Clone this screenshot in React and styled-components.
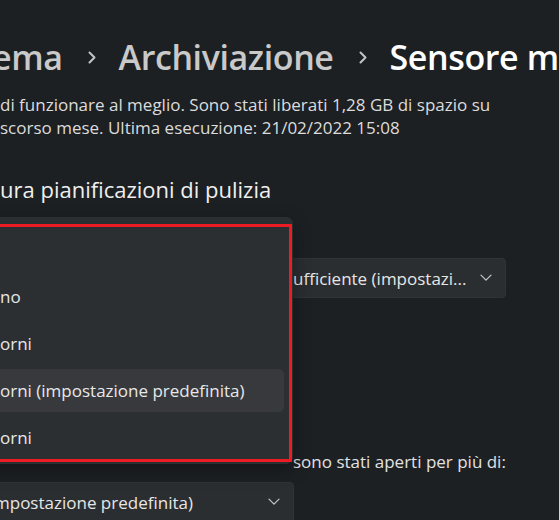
import styled, { createGlobalStyle } from "styled-components";

const Global = createGlobalStyle`
  html, body {
    margin: 0;
    padding: 0;
    background: #1d2023;
    overflow: hidden;
  }
`;

const Page = styled.div`
  position: relative;
  width: 559px;
  height: 520px;
  overflow: hidden;
  background: #1d2023;
  font-family: "Open Sans", "Noto Sans", sans-serif;
  color: #e4e4e4;
`;

const Breadcrumb = styled.div`
  display: flex;
  align-items: center;
  height: 46px;
  margin: 34px 0 0 -8px;
  white-space: nowrap;
  font-size: 34px;
  font-weight: 600;
  letter-spacing: -0.4px;
`;

const Crumb = styled.span`
  color: ${(p) => (p.current ? "#ffffff" : "#c9c9c9")};
`;

const CrumbSep = styled.span`
  display: flex;
  align-items: center;
  padding: 0 23px 0 25px;
`;

const Description = styled.p`
  margin: 13px 0 0;
  font-size: 17px;
  line-height: 23px;
  color: #dcdcdc;
  white-space: nowrap;
`;

const SectionTitle = styled.h2`
  margin: 36px 0 0;
  font-size: 22px;
  line-height: 28px;
  font-weight: 500;
  color: #efefef;
  white-space: nowrap;
`;

const Row = styled.div`
  display: flex;
  justify-content: flex-end;
  padding-right: 53px;
  margin-top: ${(p) => p.top || 0}px;
`;

const Select = styled.div`
  display: flex;
  align-items: center;
  justify-content: space-between;
  box-sizing: border-box;
  width: ${(p) => p.width}px;
  height: 40px;
  padding: 0 13px 0 ${(p) => p.padLeft ?? 12}px;
  background: #2b2e31;
  border: 1px solid #313437;
  border-radius: 4px;
  font-size: 17px;
  color: #e6e6e6;
  white-space: nowrap;
`;

const Label = styled.div`
  margin-top: 152px;
  padding-left: 293px;
  font-size: 17px;
  line-height: 24px;
  color: #e2e2e2;
  white-space: nowrap;
`;

const BottomRow = styled.div`
  display: flex;
  margin: 8px 0 0 -7px;
`;

const Flyout = styled.div`
  position: absolute;
  left: -20px;
  top: 217px;
  width: 313px;
  height: 247px;
  box-sizing: border-box;
  padding: 11px 9px 0 0;
  background: #2c2f32;
  border-radius: 0 7px 7px 0;
  box-shadow: 0 6px 18px rgba(0, 0, 0, 0.35);
  display: flex;
  flex-direction: column;
  gap: 4px;
`;

const Option = styled.div`
  display: flex;
  align-items: center;
  height: 43px;
  padding-left: 20px;
  border-radius: 5px;
  font-size: 17px;
  color: #e8e8e8;
  white-space: nowrap;
  background: ${(p) => (p.selected ? "#37393c" : "transparent")};
`;

const Highlight = styled.div`
  position: absolute;
  left: 0;
  top: 7px;
  right: 1px;
  height: 238px;
  box-sizing: border-box;
  border: 3px solid #ee1b22;
  pointer-events: none;
`;

const Chevron = ({ size = 12, color = "#c4c4c4" }) => (
  <svg width={size} height={size * 0.6} viewBox="0 0 12 7" fill="none">
    <path
      d="M1 1 L6 6 L11 1"
      stroke={color}
      strokeWidth="1.3"
      strokeLinecap="round"
      strokeLinejoin="round"
    />
  </svg>
);

const CrumbChevron = () => (
  <svg width="8" height="13" viewBox="0 0 8 13" fill="none">
    <path
      d="M1.5 1.5 L6.5 6.5 L1.5 11.5"
      stroke="#c4c4c4"
      strokeWidth="2"
      strokeLinecap="round"
      strokeLinejoin="round"
    />
  </svg>
);

const options = [
  { label: "" },
  { label: "no" },
  { label: "orni" },
  { label: "orni (impostazione predefinita)", selected: true },
  { label: "orni" },
];

export default function App() {
  return (
    <>
      <Global />
      <Page>
        <Breadcrumb>
          <Crumb>ema</Crumb>
          <CrumbSep>
            <CrumbChevron />
          </CrumbSep>
          <Crumb>Archiviazione</Crumb>
          <CrumbSep>
            <CrumbChevron />
          </CrumbSep>
          <Crumb current>Sensore m</Crumb>
        </Breadcrumb>
        <Description>
          di funzionare al meglio. Sono stati liberati 1,28 GB di spazio su
          <br />
          scorso mese. Ultima esecuzione: 21/02/2022 15:08
        </Description>
        <SectionTitle>ura pianificazioni di pulizia</SectionTitle>
        <Row top={55}>
          <Select width={226} padLeft={12}>
            <span>ufficiente (impostazi...</span>
            <Chevron />
          </Select>
        </Row>
        <Label>sono stati aperti per più di:</Label>
        <BottomRow>
          <Select width={301} padLeft={0}>
            <span>mpostazione predefinita)</span>
            <Chevron />
          </Select>
        </BottomRow>
        <Flyout>
          {options.map((o, i) => (
            <Option key={i} selected={o.selected}>
              {o.label}
            </Option>
          ))}
          <Highlight />
        </Flyout>
      </Page>
    </>
  );
}
